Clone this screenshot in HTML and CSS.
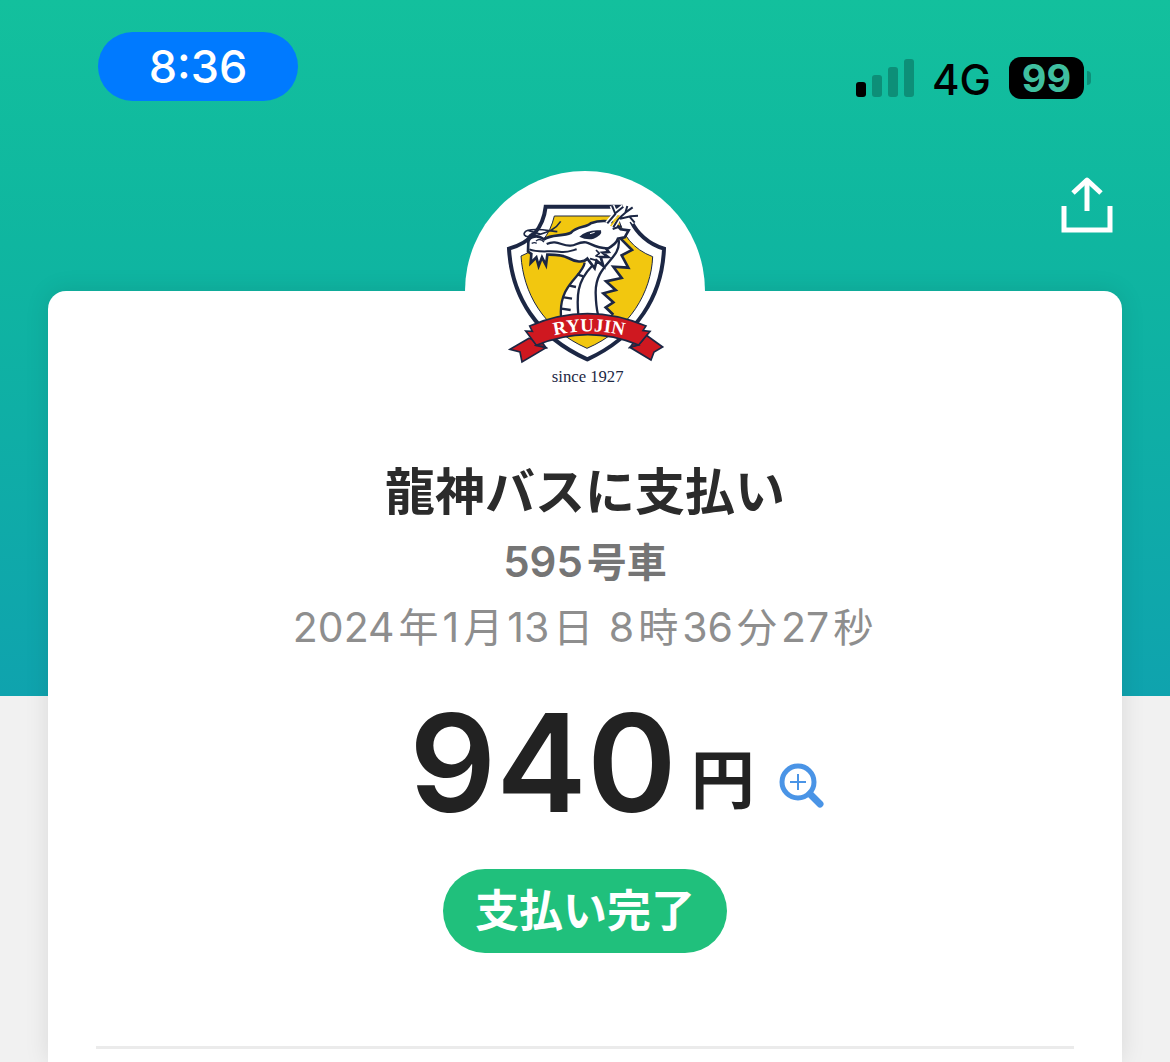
FILE: index.html
```html
<!DOCTYPE html>
<html lang="ja">
<head>
  <meta charset="UTF-8">
  <meta name="viewport" content="width=device-width, initial-scale=1.0">
  <title>支払い完了</title>
  <link rel="stylesheet" href="styles.css">
</head>
<body>
  <div class="status-bar">
    <div class="clock">8:36</div>
    <div class="indicators">
      <svg class="signal" width="58" height="38" viewBox="0 0 58 38" aria-hidden="true">
        <rect x="0" y="23" width="10" height="15" rx="3" fill="#000"/>
        <g fill="#0d8f78">
          <rect x="16" y="16" width="10" height="22" rx="3"/>
          <rect x="32" y="8" width="10" height="30" rx="3"/>
          <rect x="48" y="0" width="10" height="38" rx="3"/>
        </g>
      </svg>
      <span class="network">4G</span>
      <div class="battery"><span class="battery-level">99</span><span class="battery-tip"></span></div>
    </div>
  </div>

  <header class="header">
    <button class="share-btn" aria-label="共有">
      <svg width="54" height="58" viewBox="0 0 54 58" fill="none" stroke="#fff" stroke-width="5">
        <path d="M4 30V54H50V30"/>
        <path d="M27 35V4"/>
        <path d="M13 17L27 4L41 17" stroke-linejoin="round"/>
      </svg>
    </button>
  </header>

  <main class="card">
    <div class="logo">
      <svg viewBox="15 33 720 720" role="img" aria-label="RYUJIN since 1927" stroke="#1c2744" stroke-linejoin="round">
        <!-- shield -->
        <path d="M257 140H500C512 192 548 248 612 266C606 410 530 530 382 598C230 530 155 410 147 266C215 247 250 200 257 140Z" fill="#fff" stroke="none"/>
        <path d="M488 140H257C250 200 215 247 147 266C155 410 230 530 382 598C530 530 606 410 612 266C564 252 530 218 514 184" fill="none" stroke-width="12" stroke-linejoin="miter"/>
        <path d="M283 168H474C486 225 520 268 578 290C574 395 510 510 381 565C245 505 190 395 183 288C235 268 270 225 283 168Z" fill="#f2c70f" stroke-width="3"/>
        <!-- neck and mane -->
        <path d="M380 292C374 345 298 370 303 470L460 470L437 442L460 427L430 400L467 390L440 364L487 354L465 320L505 323L485 286L516 270L482 236Z" fill="#fff" stroke="none"/>
        <path d="M482 236L516 270L485 286L505 323L460 320L485 354L438 364L467 390L430 400L460 427L437 442L460 464" fill="none" stroke-width="8" stroke-linejoin="miter"/>
        <path d="M374 308C368 350 296 372 303 468M396 318C350 365 350 410 355 466M476 240C484 300 405 310 407 400Q408 440 414 464" fill="none" stroke-width="7"/>
        <path d="M351 343L370 349M328 377L348 381M312 412L336 416M304 446L332 450" fill="none" stroke-width="7"/>
        <!-- head -->
        <path d="M205 245C208 228 235 224 252 238C275 222 305 230 333 218C350 198 380 203 392 190C420 180 450 181 468 192L482 208L506 211L494 232L474 236C470 250 458 258 440 268L446 276L428 278L444 291L422 291L430 318L410 302L404 325L382 296C370 310 345 305 325 294C305 283 280 284 262 284L258 315L246 292L236 318L229 292L212 309L214 282L204 275Z" fill="#fff" stroke-width="8" stroke-linejoin="miter"/>
        <path d="M208 268C235 280 270 270 304 276C320 278 335 272 350 268" fill="none" stroke-width="6"/>
        <path d="M260 252C290 238 305 258 330 257C350 258 352 244 378 247C395 250 402 264 444 265" fill="none" stroke-width="7"/>
        <path d="M408 270L418 280L408 288L424 292M390 296L412 302" fill="none" stroke-width="5"/>
        <path d="M228 243Q240 233 252 246M215 250Q224 246 230 250" fill="none" stroke-width="4"/>
        <path d="M358 230Q382 207 423 211Q428 225 401 236Q380 241 358 230Z" stroke="none" fill="#1c2744"/>
        <path d="M390 221L404 217" stroke="#fff" stroke-width="3"/>
        <!-- whiskers -->
        <path d="M302 184C288 206 270 216 220 228C190 236 184 218 204 211C230 204 265 212 292 215M206 212L240 222M218 220Q202 228 200 244" fill="none" stroke-width="5"/>
        <!-- horns: white halo under dark branches -->
        <path d="M442 190L466 162L456 137M466 160L490 140M460 202L474 178L496 158L518 142M496 158L502 138M480 176L512 169L534 167M508 169L524 188" fill="none" stroke="#fff" stroke-width="15"/>
        <path d="M442 190L466 162L456 137M466 160L490 140M460 202L474 178L496 158L518 142M496 158L502 138M480 176L512 169L534 167M508 169L524 188" fill="none" stroke-width="6"/>
        <path d="M452 198L478 166" stroke="#f2c70f" stroke-width="5"/>
        <path d="M458 207L484 198" stroke-width="6"/>
        <!-- ribbon -->
        <g fill="#cf1820" stroke-width="5" stroke-linejoin="miter">
          <path d="M207 535L150 568L180 576L186 606L258 563L231 553L216 538Z"/>
          <path d="M558 525L608 561L582 576L573 600L510 562L536 553L548 540Z"/>
          <path d="M228 556L258 563L246 546ZM536 555L510 562L522 546Z" fill="#7d1a2b"/>
          <path d="M197 513L217 514L209 498Q382 424 558 498L549 512L570 514L536 555Q382 492 229 556Z"/>
        </g>
        <path id="ribbon-line" d="M262 532Q386 496 512 532" fill="none" stroke="none"/>
        <text class="logo-name" stroke="none"><textPath href="#ribbon-line" startOffset="50%">RYUJIN</textPath></text>
        <text class="logo-since" x="383" y="666" stroke="none">since 1927</text>
      </svg>
    </div>

    <h1 class="title">龍神バスに支払い</h1>
    <p class="vehicle">595<span class="kanji">号車</span></p>
    <p class="date">2024<span class="kanji">年</span>1<span class="kanji">月</span>13<span class="kanji">日</span> 8<span class="kanji">時</span>36<span class="kanji">分</span>27<span class="kanji">秒</span></p>

    <div class="amount">
      <p class="price">940<span class="yen">円</span></p>
      <button class="zoom-btn" aria-label="拡大">
        <svg width="46" height="46" viewBox="0 0 46 46" fill="none" stroke="#4a94e6">
          <circle cx="19" cy="19" r="16" stroke-width="5"/>
          <path d="M31 31L41 41" stroke-width="7" stroke-linecap="round"/>
          <path d="M11 19H27M19 11V27" stroke-width="2"/>
        </svg>
      </button>
    </div>

    <div class="badge">支払い完了</div>
    <hr class="divider">
  </main>
</body>
</html>
```
FILE: styles.css
```css
* {
  box-sizing: border-box;
  margin: 0;
  padding: 0;
}

body {
  min-height: 100vh;
  display: flex;
  flex-direction: column;
  font-family: Inter, 'Noto Sans CJK JP', sans-serif;
  color: #222;
  background: #f1f1f1 linear-gradient(#13c09d 0%, #0fb6a0 35%, #0fa3ae 100%) no-repeat top / 100% 696px;
}

button {
  border: none;
  background: none;
  cursor: pointer;
}

svg {
  display: block;
}

.status-bar {
  display: flex;
  justify-content: space-between;
  align-items: flex-start;
  padding: 32px 79px 0 98px;
}

.clock {
  width: 200px;
  border-radius: 35px;
  background: #007aff;
  color: #fff;
  font-size: 45px;
  font-weight: 500;
  line-height: 69px;
  text-align: center;
}

.indicators {
  display: flex;
  align-items: center;
  gap: 18px;
  padding-top: 25px;
  color: #000;
}

.network {
  padding-top: 4px;
  font-size: 42px;
  font-weight: 500;
  line-height: 38px;
}

.battery {
  display: flex;
  align-items: center;
  gap: 3px;
}

.battery-level {
  width: 75px;
  border-radius: 12px;
  background: #000;
  color: #3fbf9f;
  font-size: 38px;
  font-weight: 700;
  line-height: 42px;
  text-align: center;
}

.battery-tip {
  width: 4px;
  height: 14px;
  border-radius: 0 4px 4px 0;
  background: #0d8f78;
}

.header {
  display: flex;
  justify-content: flex-end;
  padding: 75px 56px 57px;
}

.card {
  flex: 1;
  display: flex;
  flex-direction: column;
  align-items: center;
  margin: 0 48px;
  padding: 0 48px 12px;
  border-radius: 18px 18px 0 0;
  background: #fff;
  box-shadow: 0 0 24px rgba(0, 0, 0, 0.1);
}

.logo {
  width: 240px;
  margin-top: -120px;
  border-radius: 50%;
  background: #fff;
}

.logo-name {
  font-family: 'Liberation Serif', serif;
  font-size: 56px;
  font-weight: 700;
  fill: #fff;
  text-anchor: middle;
}

.logo-since {
  font-family: 'Liberation Serif', serif;
  font-size: 50px;
  fill: #1c2744;
  text-anchor: middle;
}

.title {
  margin-top: 49px;
  font-size: 50px;
  font-weight: 700;
  line-height: 64px;
  color: #2b2b2b;
}

.vehicle {
  margin-top: 6px;
  font-size: 42px;
  font-weight: 600;
  line-height: 64px;
  color: #757575;
}

.date {
  font-size: 41px;
  line-height: 66px;
  color: #8e8e8e;
}

.kanji {
  margin: 0 4px;
  font-size: 40px;
  line-height: 40px;
}

.vehicle .kanji {
  margin-right: 0;
}

.amount {
  width: 100%;
  display: grid;
  grid-template-columns: 1fr auto 1fr;
  align-items: end;
  margin-top: 25px;
}

.price {
  grid-column: 2;
  padding-right: 6px;
  font-size: 136px;
  font-weight: 600;
  line-height: 156px;
}

.yen {
  margin-left: 14px;
  font-size: 64px;
  line-height: 64px;
  vertical-align: 9px;
}

.zoom-btn {
  justify-self: start;
  margin: 0 0 32px 18px;
}

.badge {
  margin-top: 28px;
  padding: 0 32px;
  border-radius: 42px;
  background: #20c07c;
  color: #fff;
  font-size: 44px;
  font-weight: 700;
  line-height: 84px;
}

.divider {
  width: 100%;
  height: 3px;
  margin-top: 93px;
  border: none;
  background: #ebebeb;
}
```
